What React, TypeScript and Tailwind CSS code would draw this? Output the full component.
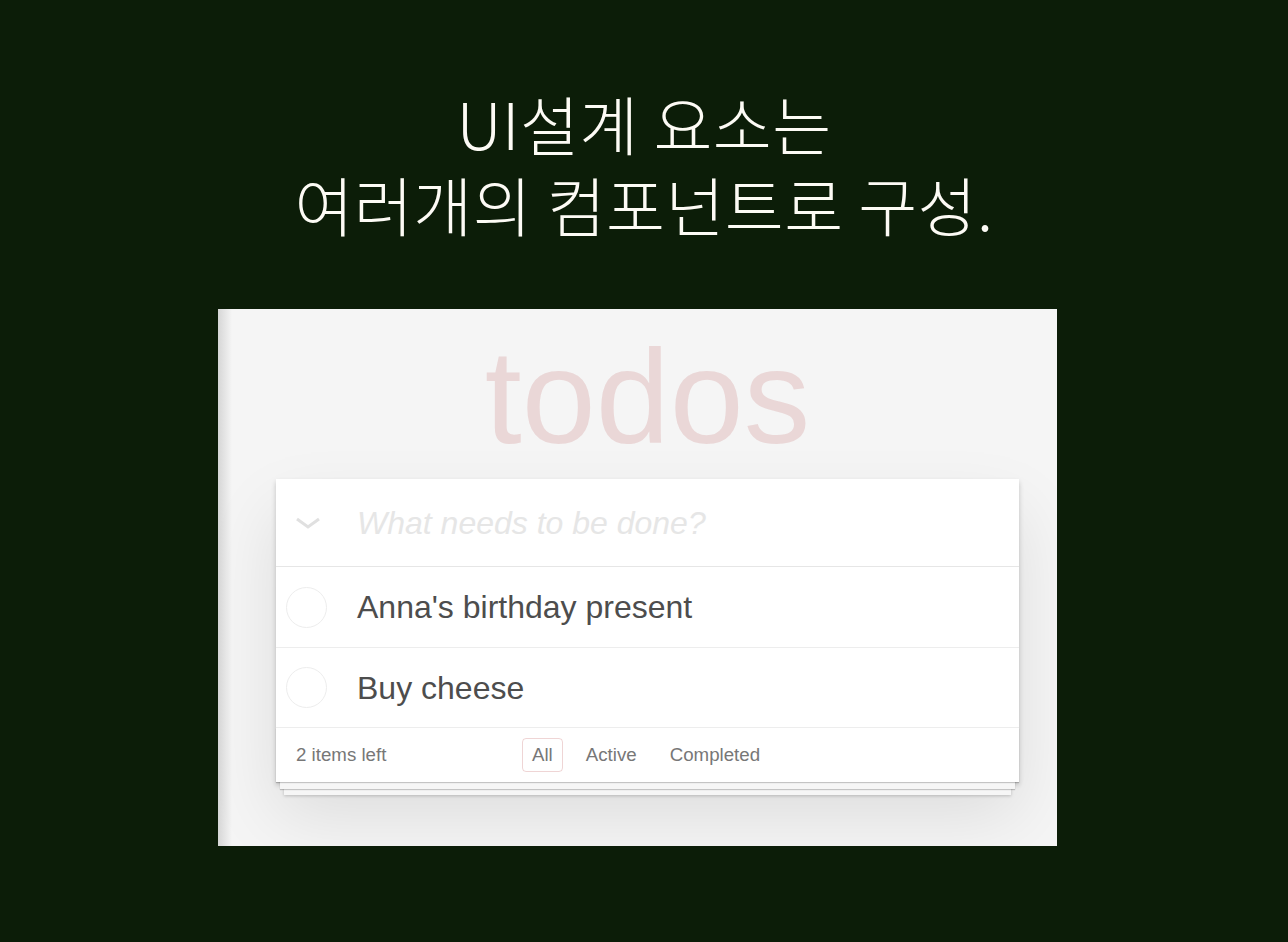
export default function App() {
  return (
    <div className="w-full h-[942px] bg-[#0c1d08] flex flex-col overflow-hidden">
      <h1 className="pt-[82px] text-center text-[64px] leading-[81px] font-light text-[#fdfbf5] tracking-[0.5px] font-['Noto_Sans_CJK_KR','Noto_Sans',sans-serif]">
        <div>UI설계 요소는</div>
        <div>여러개의 컴포넌트로 구성.</div>
      </h1>
      <div className="mt-[65px] ml-[218px] w-[839px] h-[537px] bg-[#f5f5f5] flex overflow-hidden font-['Liberation_Sans',Arial,sans-serif]">
        <div className="w-[14px] shrink-0 bg-gradient-to-r from-[#d6d6d6] to-[#f5f5f5]" />
        <div className="pl-[44px] flex flex-col">
          <div className="w-[743px] pt-[22px] text-center text-[133px] leading-[133px] text-[rgba(175,47,47,0.15)]">
            todos
          </div>
          <div className="mt-[15px] w-[743px] bg-white shadow-[0_3px_5px_0_rgba(0,0,0,0.2),0_33px_66px_0_rgba(0,0,0,0.1)]">
            <div className="h-[88px] flex items-center border-b border-[#e6e6e6]">
              <div className="w-[81px] shrink-0 flex justify-start pl-[19px]">
                <svg width="26" height="16" viewBox="0 0 26 16">
                  <path d="M2 4 L13 12 L24 4" fill="none" stroke="#e0e0e0" strokeWidth="3" />
                </svg>
              </div>
              <span className="italic text-[32px] text-[#e6e6e6]">What needs to be done?</span>
            </div>
            <div className="h-[81px] flex items-center border-b border-[#ededed]">
              <div className="ml-[10px] w-[41px] h-[41px] rounded-full border border-[#ededed] shrink-0" />
              <span className="ml-[30px] text-[32px] leading-[38px] text-[#4d4d4d]">Anna&apos;s birthday present</span>
            </div>
            <div className="h-[80px] flex items-center border-b border-[#ededed]">
              <div className="ml-[10px] w-[41px] h-[41px] rounded-full border border-[#ededed] shrink-0" />
              <span className="ml-[30px] text-[32px] leading-[38px] text-[#4d4d4d]">Buy cheese</span>
            </div>
            <div className="h-[54px] px-[20px] flex items-center text-[18.7px] text-[#777] bg-white shadow-[0_1px_1px_rgba(0,0,0,0.2),0_11px_0_-4px_#f6f6f6,0_12px_1px_-4px_rgba(0,0,0,0.2),0_21px_0_-8px_#f6f6f6,0_22px_3px_-8px_rgba(0,0,0,0.2)]">
              <span className="w-[226px] shrink-0">2 items left</span>
              <div className="flex items-center gap-[13px]">
                <span className="border border-[rgba(175,47,47,0.2)] rounded-[4px] px-[9px] py-[2px]">All</span>
                <span className="border border-transparent rounded-[4px] px-[9px] py-[2px]">Active</span>
                <span className="border border-transparent rounded-[4px] px-[9px] py-[2px]">Completed</span>
              </div>
            </div>
          </div>
        </div>
      </div>
    </div>
  );
}
